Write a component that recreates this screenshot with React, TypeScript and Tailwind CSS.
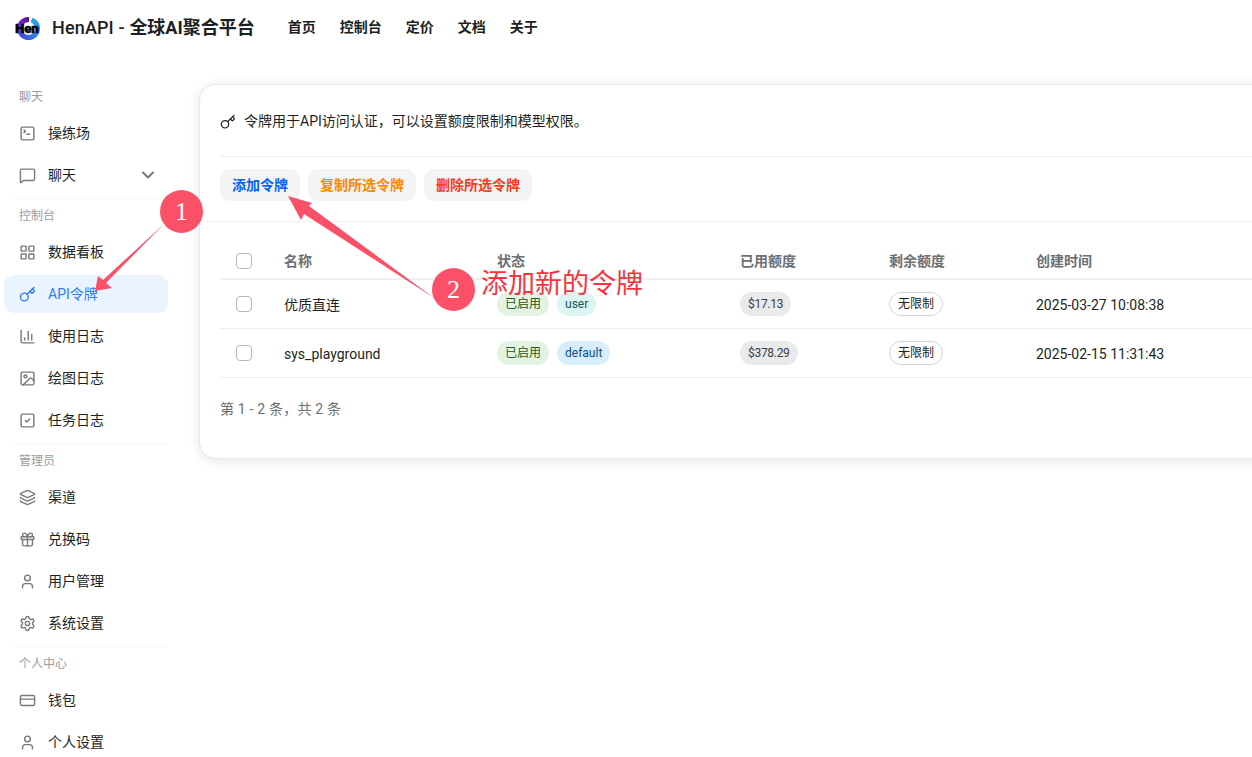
import {
  ChevronDown,
  CreditCard,
  Gift,
  Image,
  Key,
  Layers,
  LayoutGrid,
  MessageSquare,
  Settings,
  SquareCheck,
  SquareTerminal,
  User,
  ChartColumn,
} from "lucide-react";
import type { ReactNode } from "react";

const FONT = { fontFamily: 'Roboto, "Noto Sans CJK SC", sans-serif' };

const icon = "h-[17px] w-[17px] shrink-0 stroke-2 text-[#77797d]";

const sections: { title: string; items: { label: string; icon: ReactNode; active?: boolean; arrow?: boolean }[] }[] = [
  {
    title: "聊天",
    items: [
      { label: "操练场", icon: <SquareTerminal className={icon} /> },
      { label: "聊天", icon: <MessageSquare className={icon} />, arrow: true },
    ],
  },
  {
    title: "控制台",
    items: [
      { label: "数据看板", icon: <LayoutGrid className={icon} /> },
      { label: "API令牌", icon: <Key className="h-[17px] w-[17px] shrink-0 stroke-2 text-[#2b7cf6]" />, active: true },
      { label: "使用日志", icon: <ChartColumn className={icon} /> },
      { label: "绘图日志", icon: <Image className={icon} /> },
      { label: "任务日志", icon: <SquareCheck className={icon} /> },
    ],
  },
  {
    title: "管理员",
    items: [
      { label: "渠道", icon: <Layers className={icon} /> },
      { label: "兑换码", icon: <Gift className={icon} /> },
      { label: "用户管理", icon: <User className={icon} /> },
      { label: "系统设置", icon: <Settings className={icon} /> },
    ],
  },
  {
    title: "个人中心",
    items: [
      { label: "钱包", icon: <CreditCard className={icon} /> },
      { label: "个人设置", icon: <User className={icon} /> },
    ],
  },
];

const rows = [
  { name: "优质直连", group: "user", groupClass: "bg-[#dcf5f2] text-[#0b5a5a]", used: "$17.13", created: "2025-03-27 10:08:38" },
  { name: "sys_playground", group: "default", groupClass: "bg-[#d9eefc] text-[#0a4c8f]", used: "$378.29", created: "2025-02-15 11:31:43" },
];

const columns = "grid grid-cols-[64px_213px_243px_149px_147px_1fr] items-center";

function Logo() {
  return (
    <div className="relative h-6 w-7 shrink-0">
      <div className="absolute left-[2px] top-[1px] h-[23px] w-[23px] rounded-full bg-[conic-gradient(from_20deg,#2aa7e8,#2f7fe0_120deg,#4a50d8_200deg,#7a1fb8_290deg,#5a0f9a_340deg,transparent_340deg)]" />
      <div className="absolute left-[7px] top-[6px] h-[13px] w-[13px] rounded-full bg-white" />
      <span className="absolute left-0 top-[3px] text-[13.5px] font-black leading-[18px] tracking-[-0.3px] text-black [-webkit-text-stroke:0.4px_black]">
        Hen
      </span>
    </div>
  );
}

function Checkbox() {
  return <div className="h-4 w-4 rounded-[4px] border border-[#b5b7ba] bg-white" />;
}

function Sidebar() {
  return (
    <aside className="w-[175px] shrink-0 pl-1">
      {sections.map((section, i) => (
        <div key={section.title}>
          {i > 0 && <div className="ml-2 mt-1 w-[156px] border-t border-[#f8f8f8]" />}
          <div className={`pl-[15px] text-[12px] leading-4 text-[#9a9b9d] ${i > 0 ? "pt-[9px]" : ""} pb-[9px]`}>
            {section.title}
          </div>
          <div className="flex flex-col gap-1">
            {section.items.map((item) => (
              <div
                key={item.label}
                className={`flex h-[38px] w-[164px] items-center rounded-[10px] pl-[15px] pr-[10px] text-[14px] ${
                  item.active ? "bg-[#eaf4ff] text-[#2b7cf6]" : "text-[#1c1f23]"
                }`}
              >
                <span className="mr-[13px] flex h-4 w-4 items-center justify-center">{item.icon}</span>
                <span className="flex-1">{item.label}</span>
                {item.arrow && <ChevronDown className="h-5 w-5 stroke-[2.5] text-[#77797d]" />}
              </div>
            ))}
          </div>
        </div>
      ))}
    </aside>
  );
}

function Annotations() {
  return (
    <div className="pointer-events-none absolute inset-0">
      <svg className="absolute left-0 top-0" width="1252" height="757">
        <polygon points="164,224 106,283 112,288 95,291 98,276 103,280" fill="#fb5168" />
        <polygon points="288,196 312,203 309,206 434,298 304,214 301,220" fill="#fb5168" />
      </svg>
      <div
        className="absolute left-[160px] top-[190px] flex h-[43px] w-[43px] items-center justify-center rounded-full bg-[#fb5168] text-[26px] text-white"
        style={{ fontFamily: '"Liberation Serif", serif' }}
      >
        1
      </div>
      <div
        className="absolute left-[432px] top-[268px] flex h-[43px] w-[43px] items-center justify-center rounded-full bg-[#fb5168] text-[26px] text-white"
        style={{ fontFamily: '"Liberation Serif", serif' }}
      >
        2
      </div>
      <div className="absolute left-[481px] top-[266px] text-[27px] leading-9 text-[#f5343f]">添加新的令牌</div>
    </div>
  );
}

export default function App() {
  return (
    <div className="relative h-[757px] w-[1252px] overflow-hidden bg-white" style={FONT}>
      <header className="flex h-[55px] items-center pl-[15px]">
        <Logo />
        <div className="ml-[9px] text-[18px] font-medium tracking-[0.15px] text-[#1c1f23]">
          HenAPI - <span className="font-bold tracking-normal">全球AI聚合平台</span>
        </div>
        <nav className="ml-[33px] flex gap-6 text-[14px] font-semibold text-[#1c1f23]">
          <span>首页</span>
          <span>控制台</span>
          <span>定价</span>
          <span>文档</span>
          <span>关于</span>
        </nav>
      </header>

      <div className="flex pt-[34px]">
        <Sidebar />
        <main className="ml-[24px] mt-[-5px] h-[375px] w-[1100px] shrink-0 rounded-2xl border border-[#e6e7e8] bg-white px-5 shadow-[0_2px_12px_rgba(0,0,0,0.1)]">
          <div className="flex h-[72px] items-center border-b border-[#eeeff0] pt-[2px] text-[14px] text-[#1c1f23]">
            <Key className="mr-2 h-4 w-4 stroke-[1.8]" />
            令牌用于API访问认证，可以设置额度限制和模型权限。
          </div>
          <div className="-mx-5 flex h-[65px] items-start gap-2 border-b border-[#eeeff0] px-5 pt-3 text-[14px] font-semibold">
            <button className="h-8 rounded-[10px] bg-[#f4f4f5] px-3 text-[#0064fa]">添加令牌</button>
            <button className="h-8 rounded-[10px] bg-[#f4f4f5] px-3 text-[#fc8800]">复制所选令牌</button>
            <button className="h-8 rounded-[10px] bg-[#f4f4f5] px-3 text-[#f93920]">删除所选令牌</button>
          </div>
          <div className="pt-[22px]">
            <div className={`${columns} h-[36px] border-b-2 border-[#eeeff0] text-[14px] font-semibold text-[#6b6f75]`}>
              <div className="pl-4"><Checkbox /></div>
              <div>名称</div>
              <div>状态</div>
              <div>已用额度</div>
              <div>剩余额度</div>
              <div>创建时间</div>
            </div>
            {rows.map((row) => (
              <div key={row.name} className={`${columns} h-[49px] border-b border-[#eeeff0] text-[14px] text-[#1c1f23]`}>
                <div className="pl-4"><Checkbox /></div>
                <div className="pt-[2px]">{row.name}</div>
                <div className="flex gap-2 text-[12px]">
                  <span className="flex h-6 items-center rounded-full bg-[#e3f3e3] px-2 text-[#1f5a22]">已启用</span>
                  <span className={`flex h-6 items-center rounded-full px-2 ${row.groupClass}`}>{row.group}</span>
                </div>
                <div className="flex text-[12px]">
                  <span className="flex h-6 items-center rounded-full bg-[#e9eaeb] px-2 tracking-[-0.3px] text-[#3a3d42]">{row.used}</span>
                </div>
                <div className="flex text-[12px]">
                  <span className="flex h-6 items-center rounded-full border border-[#d4d5d7] bg-white px-2">无限制</span>
                </div>
                <div className="pt-[2px] text-[14px]">{row.created}</div>
              </div>
            ))}
            <div className="pt-[21px] text-[14px] tracking-[0.2px] text-[#6b6f75]">第 1 - 2 条，共 2 条</div>
          </div>
        </main>
      </div>
      <Annotations />
    </div>
  );
}
